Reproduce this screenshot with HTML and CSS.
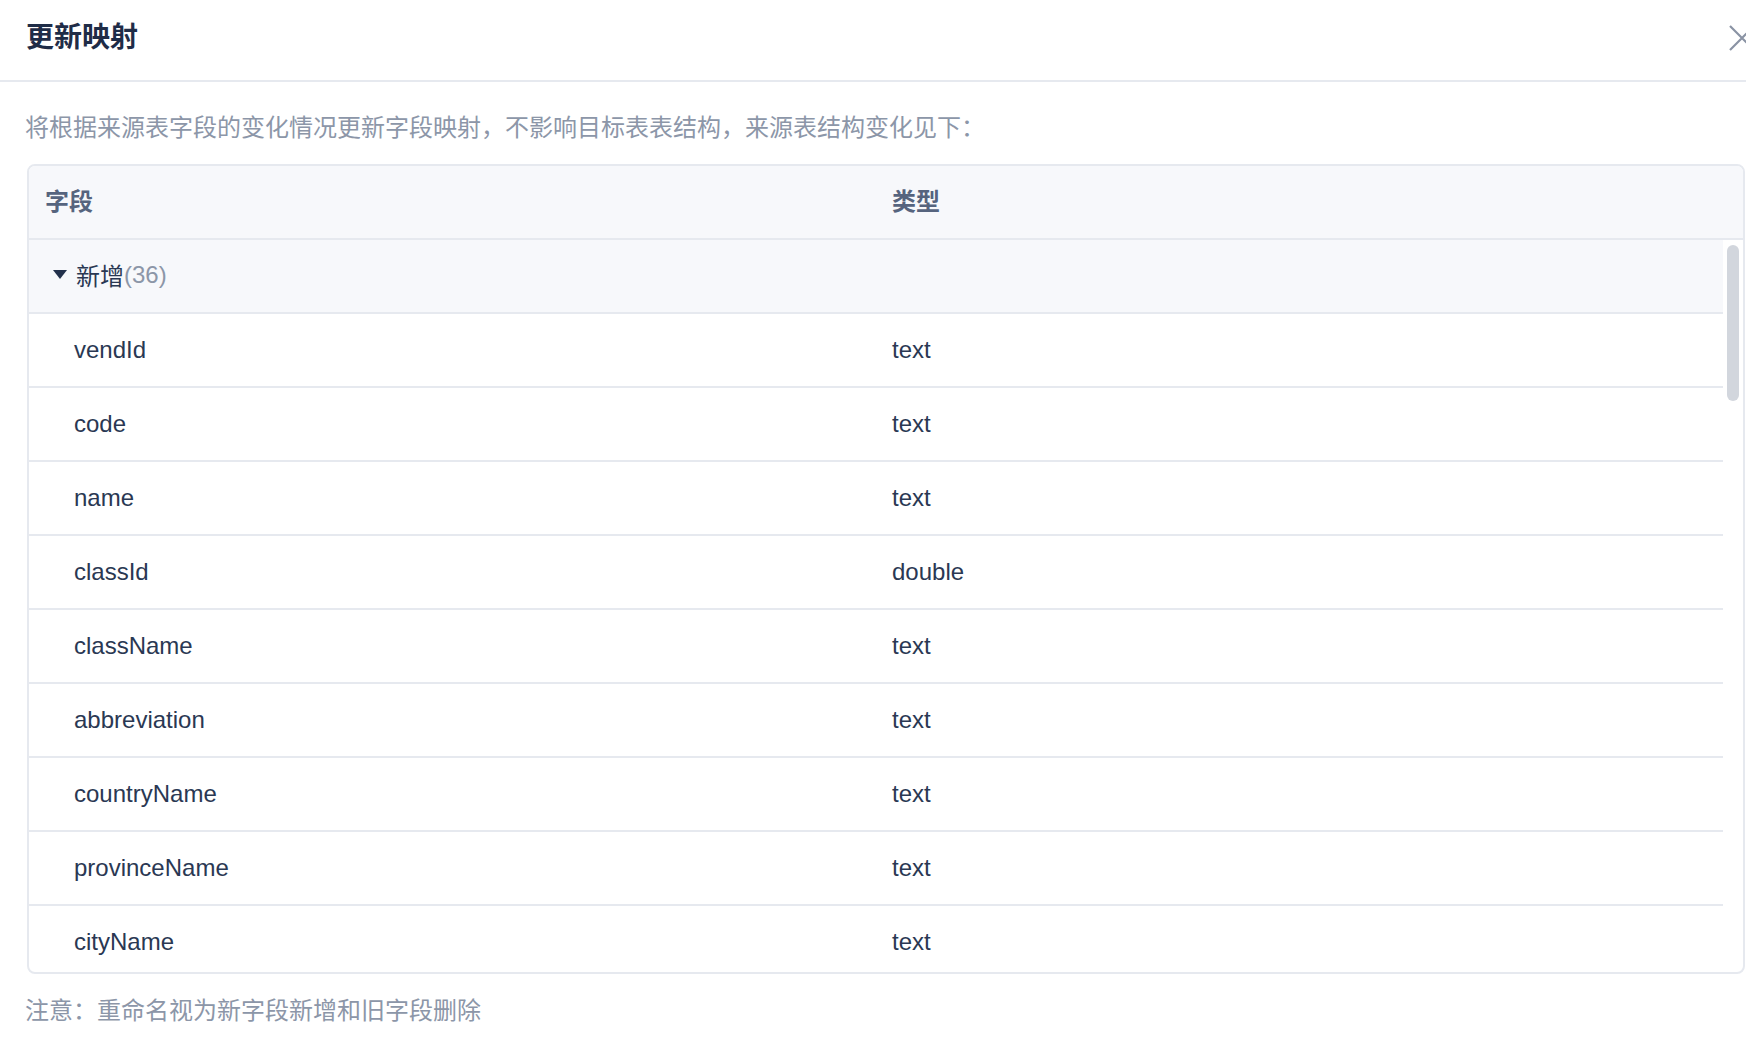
FILE: index.html
```html
<!DOCTYPE html>
<html lang="zh-CN">
<head>
  <meta charset="UTF-8">
  <title>更新映射</title>
  <meta name="viewport" content="width=device-width, initial-scale=1.0"/>
  <link rel="stylesheet" href="styles.css">
</head>
<body>
  <div class="dialog">
    <div class="dialog-header">
      <h1 class="dialog-title">更新映射</h1>
      <button class="close-btn" type="button" aria-label="关闭">
        <svg width="26" height="26" viewBox="0 0 26 26">
          <path d="M1 1 L25 25 M25 1 L1 25" stroke="#8a93a4" stroke-width="2.2" fill="none"/>
        </svg>
      </button>
    </div>

    <div class="dialog-body">
      <p class="desc">将根据来源表字段的变化情况更新字段映射，不影响目标表表结构，来源表结构变化见下：</p>

      <div class="field-table">
        <div class="ft-head">
          <div class="ft-cell">字段</div>
          <div class="ft-cell">类型</div>
          <div></div>
        </div>
        <div class="ft-body">
          <div class="ft-rows" id="fieldRows"></div>
          <div class="ft-scrollbar"><div class="ft-thumb"></div></div>
        </div>
      </div>

      <p class="note">注意：重命名视为新字段新增和旧字段删除</p>
    </div>
  </div>

  <script>
    const groups = [
      {
        label: '新增',
        fields: [
          ['vendId', 'text'], ['code', 'text'], ['name', 'text'], ['classId', 'double'],
          ['className', 'text'], ['abbreviation', 'text'], ['countryName', 'text'],
          ['provinceName', 'text'], ['cityName', 'text'], ['districtName', 'text'],
          ['address', 'text'], ['zipCode', 'text'], ['contact', 'text'], ['phone', 'text'],
          ['mobile', 'text'], ['fax', 'text'], ['email', 'text'], ['website', 'text'],
          ['bankName', 'text'], ['bankAccount', 'text'], ['taxNo', 'text'],
          ['legalPerson', 'text'], ['regCapital', 'double'], ['currency', 'text'],
          ['payTerm', 'text'], ['creditLimit', 'double'], ['buyerId', 'double'],
          ['buyerName', 'text'], ['status', 'double'], ['remark', 'text'],
          ['createBy', 'text'], ['createTime', 'text'], ['updateBy', 'text'],
          ['updateTime', 'text'], ['deleted', 'double'], ['tenantId', 'double']
        ]
      }
    ];

    const body = document.getElementById('fieldRows');

    groups.forEach(group => {
      const head = document.createElement('div');
      head.className = 'ft-row ft-group';
      head.innerHTML = `<div class="ft-cell"><span class="caret"></span>${group.label}<span class="count">(${group.fields.length})</span></div><div class="ft-cell"></div>`;
      body.appendChild(head);

      group.fields.forEach(([name, type]) => {
        const row = document.createElement('div');
        row.className = 'ft-row';
        row.innerHTML = `<div class="ft-cell ft-name">${name}</div><div class="ft-cell">${type}</div>`;
        body.appendChild(row);
      });
    });
  </script>
</body>
</html>
```

FILE: styles.css
```css
html, body {
  margin: 0;
  padding: 0;
  background: #fff;
  overflow: hidden;
}
body {
  font-family: "Liberation Sans", "Noto Sans CJK SC", sans-serif;
  color: #2a3853;
}

.dialog-header {
  display: flex;
  align-items: center;
  justify-content: space-between;
  height: 70px;
  padding: 3px 0 7px 26px;
  border-bottom: 2px solid #e6e9ef;
}
.dialog-title {
  margin: 0;
  font-size: 28px;
  line-height: 38px;
  font-weight: 700;
  color: #1f2c47;
}
.close-btn {
  background: none;
  border: none;
  padding: 0;
  margin-right: -9px;
  width: 26px;
  height: 26px;
  cursor: pointer;
}
.close-btn svg {
  display: block;
}

.dialog-body {
  padding: 28px 1px 0 27px;
}
.desc {
  margin: 0 0 18px -2px;
  font-size: 24px;
  line-height: 36px;
  color: #8c96a8;
}

.field-table {
  border: 2px solid #e6e9ef;
  border-radius: 8px;
  overflow: hidden;
  font-size: 24px;
}
.ft-head {
  display: grid;
  grid-template-columns: 1fr 1fr 20px;
  height: 72px;
  background: #f7f8fb;
  border-bottom: 2px solid #e6e9ef;
  font-weight: 700;
  color: #56647e;
}
.ft-head .ft-cell {
  padding-bottom: 5px;
}
.ft-cell {
  display: flex;
  align-items: center;
  padding-left: 16px;
  white-space: nowrap;
}

/* rows on the left, a thin scroll track in the 20px gutter on the right */
.ft-body {
  display: flex;
  height: 732px;
}
.ft-rows {
  flex: 1;
  overflow: hidden;
}
.ft-scrollbar {
  width: 20px;
  flex-shrink: 0;
}
.ft-thumb {
  margin: 5px 4px 0;
  height: 156px;
  background: #d2d6dd;
  border-radius: 6px;
}

.ft-row {
  display: grid;
  grid-template-columns: 1fr 1fr;
  height: 72px;
  border-bottom: 2px solid #e6e9ef;
}
.ft-name {
  padding-left: 45px;
}
.ft-group {
  background: #f7f8fb;
}
.ft-group .ft-cell {
  padding-left: 24px;
  padding-bottom: 3px;
}
.caret {
  width: 0;
  height: 0;
  border-left: 7px solid transparent;
  border-right: 7px solid transparent;
  border-top: 9px solid #22304b;
  margin-right: 9px;
}
.count {
  color: #8c96a8;
}

.note {
  margin: 19px 0 0 -2px;
  font-size: 24px;
  line-height: 36px;
  color: #8c96a8;
}
```
